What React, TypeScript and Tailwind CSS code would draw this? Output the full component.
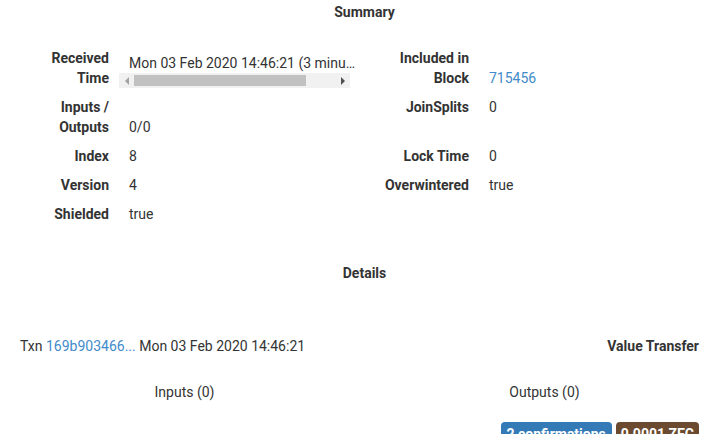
export default function App() {
  return (
    <div className="w-[702px] h-[434px] overflow-hidden bg-white text-[14px] leading-[20px] text-[#333] font-['Roboto',sans-serif]">
      <div className="w-[729px]">
        <h2 className="pt-[2px] text-center font-bold">Summary</h2>

        <div className="mt-[22px] grid grid-cols-[119px_231px_129px_250px]">
          {/* Received / Block */}
          <div className="pt-[4px] pb-[5px] pr-[10px] text-right font-bold">Received<br />Time</div>
          <div className="pt-[4px] pb-[5px] flex flex-col justify-end">
            <div className="w-[239px] overflow-hidden whitespace-nowrap text-ellipsis pl-[10px]">
              Mon 03 Feb 2020 14:46:21 (3 minutes ago)
            </div>
            {/* horizontal scrollbar */}
            <div className="flex h-[15px] items-center bg-[#f1f1f1]">
              <div className="flex w-[15px] justify-center">
                <span className="h-0 w-0 border-y-[4px] border-r-[4px] border-y-transparent border-r-[#a3a3a3]" />
              </div>
              <div className="h-[15px] py-[2px]">
                <div className="h-[11px] w-[172px] bg-[#c1c1c1]" />
              </div>
              <div className="flex-1" />
              <div className="flex w-[15px] justify-center">
                <span className="h-0 w-0 border-y-[4px] border-l-[4px] border-y-transparent border-l-[#505050]" />
              </div>
            </div>
          </div>
          <div className="pt-[4px] pb-[5px] pr-[10px] text-right font-bold">Included in<br />Block</div>
          <div className="pt-[4px] pb-[5px] pl-[10px] flex items-end">
            <a className="text-[#428bca]">715456</a>
          </div>

          {/* Inputs / JoinSplits */}
          <div className="pt-[4px] pb-[5px] pr-[10px] text-right font-bold">Inputs /<br />Outputs</div>
          <div className="pt-[4px] pb-[5px] pl-[10px] flex items-end">0/0</div>
          <div className="pt-[4px] pb-[5px] pr-[10px] text-right font-bold">JoinSplits</div>
          <div className="pt-[4px] pb-[5px] pl-[10px]">0</div>

          <div className="pt-[4px] pb-[5px] pr-[10px] text-right font-bold">Index</div>
          <div className="pt-[4px] pb-[5px] pl-[10px]">8</div>
          <div className="pt-[4px] pb-[5px] pr-[10px] text-right font-bold">Lock Time</div>
          <div className="pt-[4px] pb-[5px] pl-[10px]">0</div>

          <div className="pt-[4px] pb-[5px] pr-[10px] text-right font-bold">Version</div>
          <div className="pt-[4px] pb-[5px] pl-[10px]">4</div>
          <div className="pt-[4px] pb-[5px] pr-[10px] text-right font-bold">Overwintered</div>
          <div className="pt-[4px] pb-[5px] pl-[10px]">true</div>

          <div className="pt-[4px] pb-[5px] pr-[10px] text-right font-bold">Shielded</div>
          <div className="pt-[4px] pb-[5px] pl-[10px]">true</div>
          <div />
          <div />
        </div>

        <h2 className="mt-[34px] text-center font-bold">Details</h2>

        <div className="mt-[53px] flex justify-between pl-[20px] pr-[30px]">
          <div>
            Txn <a className="text-[#428bca]">169b903466...</a> Mon 03 Feb 2020 14:46:21
          </div>
          <div className="font-bold">Value Transfer</div>
        </div>

        <div className="mt-[26px] flex px-[4.5px]">
          <div className="w-[360px] text-center">Inputs (0)</div>
          <div className="w-[360px] text-center">Outputs (0)</div>
        </div>

        <div className="mt-[20px] flex justify-end gap-[4px] pr-[30px]">
          <span className="rounded-[4px] bg-[#337ab7] px-[6px] py-[2px] font-bold text-white">2 confirmations</span>
          <span className="rounded-[4px] bg-[#6b4a2f] px-[5px] py-[2px] font-bold text-white">0.0001 ZEC</span>
        </div>
      </div>
    </div>
  );
}
